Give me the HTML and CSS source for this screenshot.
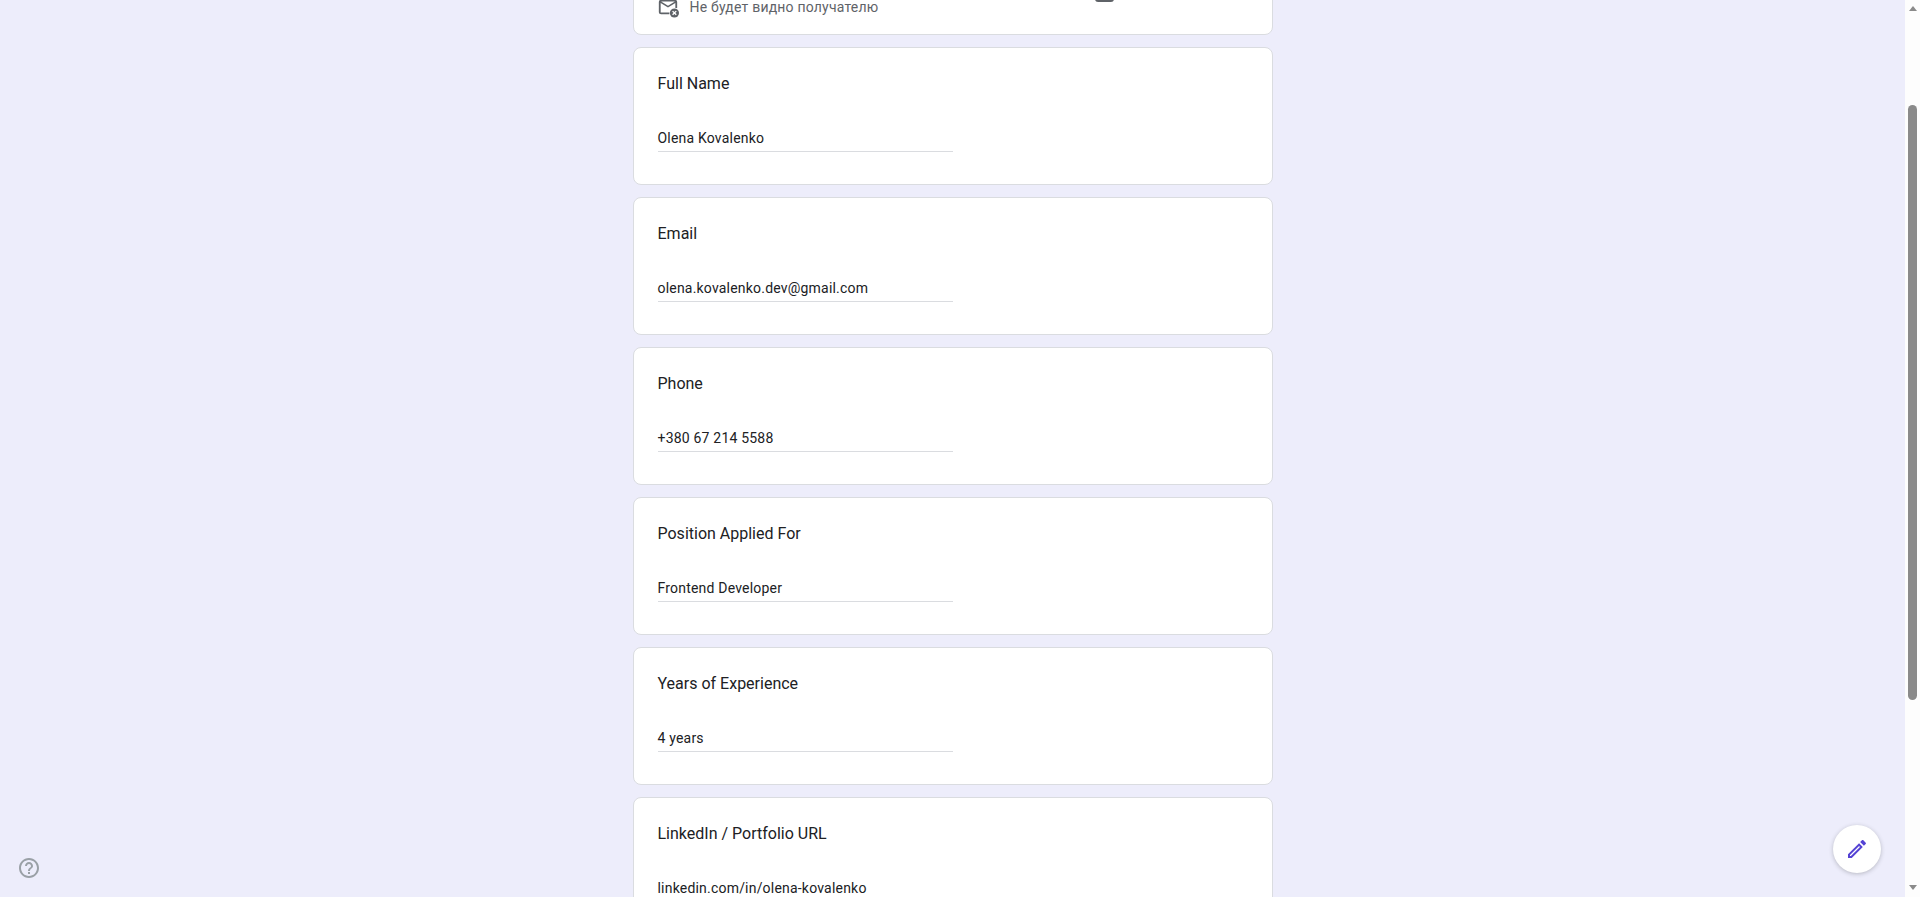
FILE: index.html
```html
<!DOCTYPE html>
<html lang="ru">
<head>
<meta charset="utf-8">
<title>Form response</title>
<link rel="stylesheet" href="styles.css">
</head>
<body>
<div class="app">
  <main class="form">
    <section class="card card-top">
      <div class="note-row">
        <div class="note">
          <svg class="note-icon" viewBox="0 0 24 24" width="24" height="24"><path d="M2 6.5C2 5.1 3.1 4 4.5 4h15C20.900 4 22 5.100 22 6.500V13h-2V7.500l-8 5-8-5V18h9.500v2H4.500C3.100 20 2 18.900 2 17.500zM4.500 6l7.500 4.700L19.500 6z"/><circle cx="19" cy="18.500" r="5"/><path class="note-x" d="M17 16.500l4 4m0-4l-4 4"/></svg>
          <span class="note-text">Не будет видно получателю</span>
        </div>
        <span class="check"></span>
      </div>
    </section>
    <section class="card"><h2 class="label">Full Name</h2><div class="field"><span class="value">Olena Kovalenko</span></div></section>
    <section class="card"><h2 class="label">Email</h2><div class="field"><span class="value">olena.kovalenko.dev@gmail.com</span></div></section>
    <section class="card"><h2 class="label">Phone</h2><div class="field"><span class="value">+380 67 214 5588</span></div></section>
    <section class="card"><h2 class="label">Position Applied For</h2><div class="field"><span class="value">Frontend Developer</span></div></section>
    <section class="card"><h2 class="label">Years of Experience</h2><div class="field"><span class="value">4 years</span></div></section>
    <section class="card"><h2 class="label">LinkedIn / Portfolio URL</h2><div class="field"><span class="value">linkedin.com/in/olena-kovalenko</span></div></section>
  </main>
  <aside class="scrollbar">
    <span class="arrow arrow-up"></span>
    <span class="thumb"></span>
    <span class="arrow arrow-down"></span>
  </aside>
  <svg class="help" viewBox="0 0 24 24" width="24" height="24"><path d="M11 18h2v-2h-2v2zm1-16C6.480 2 2 6.480 2 12s4.480 10 10 10 10-4.480 10-10S17.520 2 12 2zm0 18c-4.410 0-8-3.590-8-8s3.590-8 8-8 8 3.590 8 8-3.590 8-8 8zm0-14c-2.210 0-4 1.790-4 4h2c0-1.100.9-2 2-2s2 .9 2 2c0 2-3 1.750-3 5h2c0-2.250 3-2.500 3-5 0-2.210-1.790-4-4-4z"/></svg>
  <button class="fab" type="button" aria-label="Edit">
    <svg viewBox="0 0 24 24" width="24" height="24"><path d="M14.060 9.020l.92.92L5.920 19H5v-.92l9.060-9.060M17.660 3c-.25 0-.51.1-.7.29l-1.830 1.830 3.750 3.750 1.830-1.830c.39-.39.39-1.020 0-1.410l-2.340-2.340c-.2-.2-.45-.29-.71-.29zm-3.600 3.190L3 17.250V21h3.750L17.810 9.940l-3.750-3.750z"/></svg>
  </button>
</div>
</body>
</html>
```
FILE: styles.css
```css
* { box-sizing: border-box; }
html, body { margin: 0; height: 100%; overflow: hidden; }
body { font-family: Roboto, "Liberation Sans", sans-serif; color: #202124; background: #ededfb; }
.app { display: flex; height: 897px; position: relative; overflow: hidden; }
.form { flex: 1; display: flex; flex-direction: column; align-items: center; gap: 12px; }
.card { width: 640px; flex: 0 0 138px; padding: 24px; background: #fff; border: 1px solid #dadce0; border-radius: 8px; }
.card-top { flex-basis: 135px; margin-top: -100px; padding: 95px 24px 16px; }
.note-row { display: flex; align-items: flex-start; }
.note { flex: 0 0 437px; display: flex; align-items: center; gap: 11px; color: #5f6368; }
.note-icon { width: 22px; height: 22px; fill: #5f6368; margin-left: -1px; }
.note-x { fill: none; stroke: #fff; stroke-width: 1.500; }
.note-text { font-size: 14px; line-height: 20px; letter-spacing: .2px; }
.check { width: 19px; height: 19px; margin-top: -13px; background: #5f6368; border-radius: 3px; }
.label { margin: 0; font-size: 16px; font-weight: 400; line-height: 24px; letter-spacing: 0; color: #202124; }
.field { width: 295px; margin-top: 32px; height: 24px; border-bottom: 1px solid #dadce0; }
.value { display: block; font-size: 14px; line-height: 20px; letter-spacing: .2px; color: #202124; }
.scrollbar { flex: 0 0 15px; display: flex; flex-direction: column; align-items: center; background: #fdfdfd; }
.arrow { width: 0; height: 0; border-left: 4.500px solid transparent; border-right: 4.500px solid transparent; }
.arrow-up { margin-top: 6px; border-bottom: 5px solid #8a8a8a; }
.arrow-down { margin-top: 185px; border-top: 5px solid #8a8a8a; }
.thumb { width: 9px; height: 595px; margin-top: 94px; background: #8a8a8a; border-radius: 5px; }
.help { position: absolute; left: 17px; top: 856px; fill: #9aa0a6; }
.fab { position: absolute; left: 1833px; top: 825px; width: 48px; height: 48px; padding: 0; display: flex; align-items: center; justify-content: center; background: #fff; border: 0; border-radius: 50%; box-shadow: 0 1px 4px rgba(60, 64, 67, .3); }
.fab svg { fill: #5442d4; }
```
